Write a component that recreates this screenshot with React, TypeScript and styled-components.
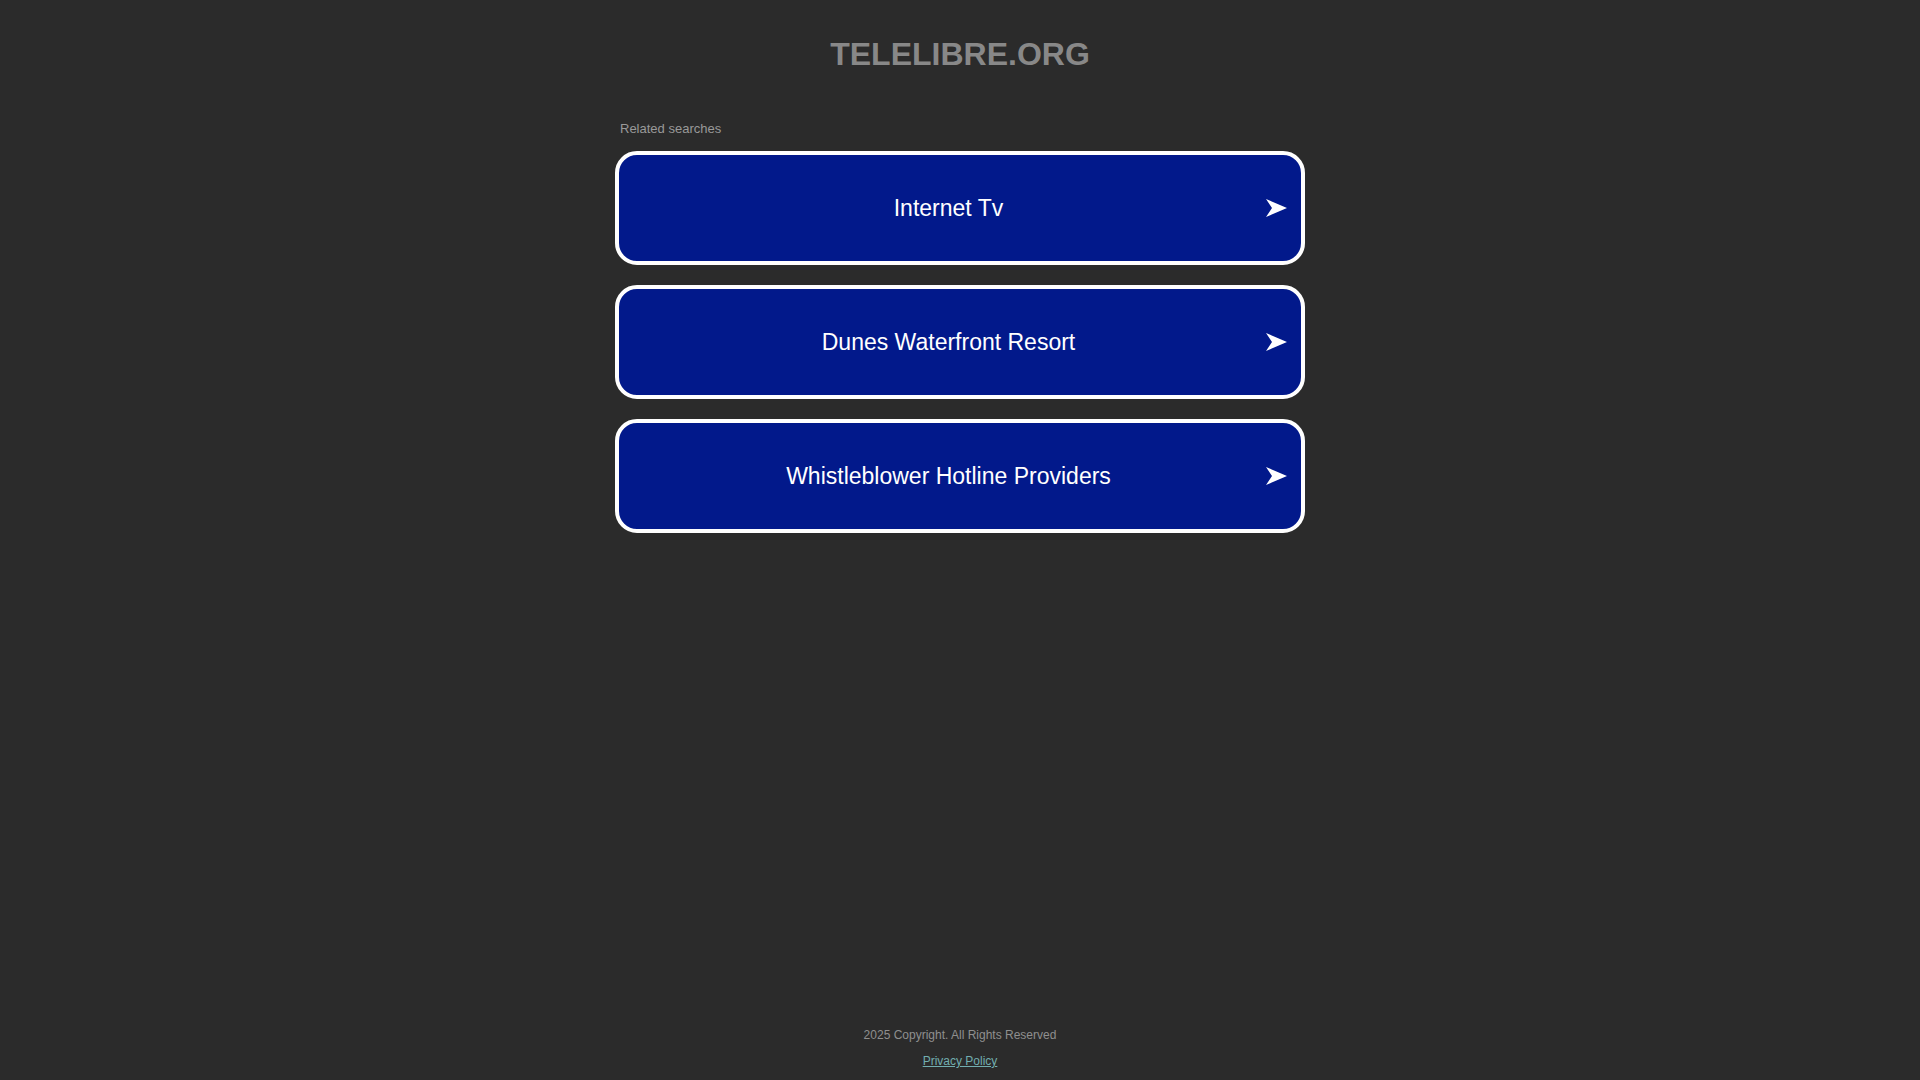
import styled, { createGlobalStyle } from "styled-components";

const GlobalStyle = createGlobalStyle`
  html,
  body {
    margin: 0;
    padding: 0;
    background: #2b2b2b;
    font-family: "Liberation Sans", Arial, Helvetica, sans-serif;
  }
`;

const searches = [
  "Internet Tv",
  "Dunes Waterfront Resort",
  "Whistleblower Hotline Providers",
];

const Arrow = () => (
  <ArrowIcon viewBox="0 0 21 18" aria-hidden="true">
    <polygon points="0,0 21,9 0,18 6,9" fill="#ffffff" />
  </ArrowIcon>
);

const App = () => {
  return (
    <>
      <GlobalStyle />
      <Page>
        <Title>TELELIBRE.ORG</Title>
        <Main>
          <Label>Related searches</Label>
          <List>
            {searches.map((s) => (
              <SearchLink key={s} href="#">
                <span className="text">{s}</span>
                <Arrow />
              </SearchLink>
            ))}
          </List>
        </Main>
        <Footer>
          <p className="copy">2025 Copyright. All Rights Reserved</p>
          <a className="privacy" href="#">
            Privacy Policy
          </a>
        </Footer>
      </Page>
    </>
  );
};

export default App;

const Page = styled.div`
  min-height: 100vh;
  display: flex;
  flex-direction: column;
  align-items: center;
`;

const Title = styled.h1`
  margin: 36px 0 0;
  font-size: 32px;
  line-height: 37px;
  font-weight: bold;
  color: #888888;
  text-align: center;
`;

const Main = styled.main`
  width: 690px;
  margin-top: 48px;
`;

const Label = styled.div`
  font-size: 13px;
  line-height: 15px;
  color: #999999;
  padding-left: 5px;
  margin-bottom: 15px;
`;

const List = styled.div`
  display: flex;
  flex-direction: column;
  gap: 20px;
`;

const SearchLink = styled.a`
  box-sizing: border-box;
  height: 114px;
  display: flex;
  align-items: center;
  padding: 0 14px 0 12px;
  background: #02198b;
  border: 4px solid #ffffff;
  border-radius: 22px;
  color: #ffffff;
  text-decoration: none;
  font-size: 23px;
  .text {
    flex: 1;
    text-align: center;
  }
`;

const ArrowIcon = styled.svg`
  width: 21px;
  height: 18px;
  flex-shrink: 0;
`;

const Footer = styled.footer`
  margin-top: auto;
  padding-bottom: 12px;
  text-align: center;
  font-size: 12px;
  line-height: 14px;
  .copy {
    margin: 0 0 12px;
    color: #8f8f8f;
  }
  .privacy {
    color: #72aeb0;
    text-decoration: underline;
  }
`;
